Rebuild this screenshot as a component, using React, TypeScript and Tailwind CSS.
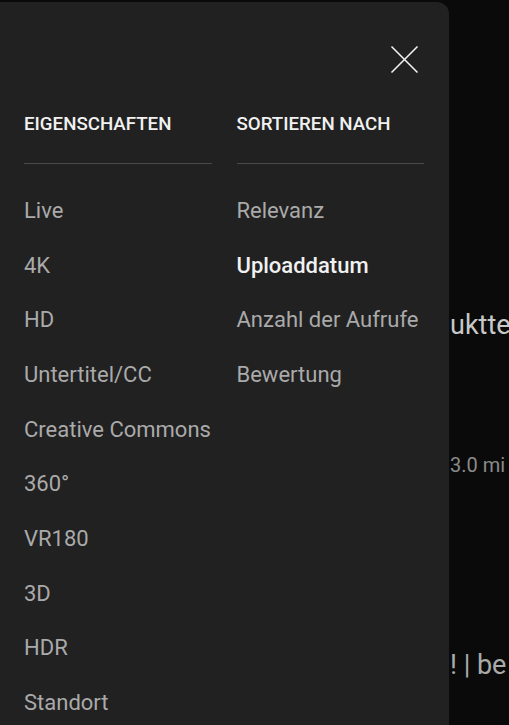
import * as React from 'react';

// Filter-Drawer über der Suchergebnisliste
const properties = [
  'Live',
  '4K',
  'HD',
  'Untertitel/CC',
  'Creative Commons',
  '360°',
  'VR180',
  '3D',
  'HDR',
  'Standort',
];

const sortOptions = ['Relevanz', 'Uploaddatum', 'Anzahl der Aufrufe', 'Bewertung'];

export default function App() {
  const [selectedSort, setSelectedSort] = React.useState('Uploaddatum');

  return (
    <div
      className="relative w-[509px] h-[725px] overflow-hidden bg-[#0a0a0a]"
      style={{ fontFamily: 'Roboto, "Noto Sans", sans-serif' }}>
      {/* Hintergrund: Ergebnisliste */}
      <div className="pl-[450px] text-[#aaaaaa] whitespace-nowrap">
        <p className="pt-[305px] text-[27px] leading-[40px] text-[#c8c8c8]">uktte</p>
        <p className="pt-[110px] text-[20px] leading-[20px] text-[#8a8a8a]">3.0 mi</p>
        <p className="pt-[175px] text-[27px] leading-[30px]">! | be</p>
      </div>

      {/* Drawer */}
      <div className="absolute left-0 top-[2px] w-[449px] h-[760px] bg-[#212121] rounded-tr-[12px]">
        <div className="flex justify-end pt-[43px] pr-[30px]">
          <button type="button" aria-label="Schließen" className="w-[29px] h-[29px]">
            <svg viewBox="0 0 29 29" className="w-[29px] h-[29px]">
              <path d="M1.5 1.5 L27.5 27.5 M27.5 1.5 L1.5 27.5" stroke="#f1f1f1" strokeWidth="1.6" fill="none" />
            </svg>
          </button>
        </div>

        <div className="grid grid-cols-2 gap-x-[25px] pl-[24px] pr-[25px] pt-[38px]">
          <div>
            <h3 className="text-[18.7px] leading-[24px] font-medium text-[#f1f1f1] pb-[27px] border-b border-[#4a4a4a]">
              EIGENSCHAFTEN
            </h3>
            <ul className="pt-[19px]">
              {properties.map((item) => (
                <li key={item} className="h-[54.7px] flex items-center text-[22px] text-[#aaaaaa] whitespace-nowrap">
                  {item}
                </li>
              ))}
            </ul>
          </div>
          <div>
            <h3 className="text-[18.7px] leading-[24px] font-medium text-[#f1f1f1] pb-[27px] border-b border-[#4a4a4a]">
              SORTIEREN NACH
            </h3>
            <ul className="pt-[19px]">
              {sortOptions.map((item) => (
                <li
                  key={item}
                  onClick={() => setSelectedSort(item)}
                  className={
                    item === selectedSort
                      ? 'h-[54.7px] flex items-center text-[22px] font-medium text-[#f1f1f1] whitespace-nowrap cursor-pointer'
                      : 'h-[54.7px] flex items-center text-[22px] text-[#aaaaaa] whitespace-nowrap cursor-pointer'
                  }>
                  {item}
                </li>
              ))}
            </ul>
          </div>
        </div>
      </div>
    </div>
  );
}
